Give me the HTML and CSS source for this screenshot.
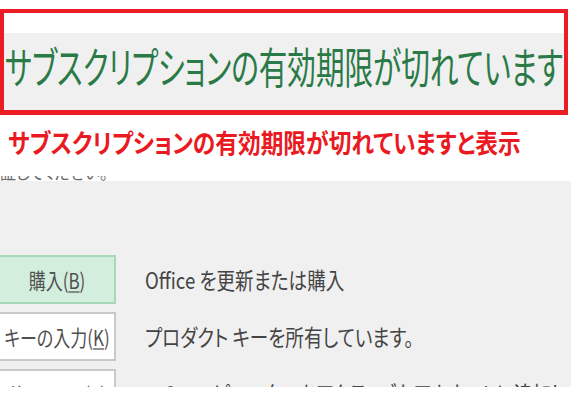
FILE: index.html
```html
<!DOCTYPE html>
<html lang="ja">
<head>
<meta charset="utf-8">
<link rel="stylesheet" href="styles.css">
</head>
<body>
<div class="page">
  <div class="top-gap"></div>
  <div class="callout">
    <div class="callout-white"></div>
    <div class="callout-band"><span class="title">サブスクリプションの有効期限が切れています</span></div>
  </div>
  <div class="note"><span class="note-text">サブスクリプションの有効期限が切れていますと表示</span></div>
  <div class="clip"><span class="clip-text">証してください。</span></div>
  <section class="panel">
    <div class="row">
      <div class="btn btn-primary"><span class="btn-label">購入(<u>B</u>)</span></div>
      <span class="desc">Office を更新または購入</span>
    </div>
    <div class="row">
      <div class="btn"><span class="btn-label">キーの入力(<u>K</u>)</span></div>
      <span class="desc">プロダクト キーを所有しています。</span>
    </div>
    <div class="row">
      <div class="btn"><span class="btn-label">サインイン(<u>S</u>)</span></div>
      <span class="desc">このコンピューターをアクティブなアカウントに追加します</span>
    </div>
  </section>
  <div class="bottom"></div>
</div>
</body>
</html>
```
FILE: styles.css
```css
html, body {
  margin: 0;
  padding: 0;
  background: #ffffff;
}
body {
  width: 571px;
  height: 400px;
  overflow: hidden;
  font-family: "Noto Sans CJK JP", "Noto Sans", sans-serif;
  font-feature-settings: "palt";
}
.page {
  display: flex;
  flex-direction: column;
  width: 571px;
}
.top-gap {
  height: 9px;
}
.callout {
  box-sizing: border-box;
  width: 568px;
  height: 106px;
  border: 4px solid #ec1c24;
  border-bottom-width: 5px;
  display: flex;
  flex-direction: column;
}
.callout-white {
  height: 20px;
  background: #ffffff;
}
.callout-band {
  flex: 1;
  background: #f0f0f0;
  display: flex;
  align-items: center;
  overflow: hidden;
  padding-left: 1px;
  padding-bottom: 10px;
  box-sizing: border-box;
}
.title {
  display: inline-block;
  white-space: nowrap;
  font-size: 28.6px;
  line-height: 1;
  font-weight: 400;
  color: #2a7a47;
  transform: scaleY(1.5);
  transform-origin: left center;
}
.note {
  height: 61px;
  display: flex;
  align-items: center;
  padding-left: 8px;
  padding-bottom: 4px;
  box-sizing: border-box;
}
.note-text {
  display: inline-block;
  white-space: nowrap;
  font-size: 22.7px;
  line-height: 1;
  font-weight: 700;
  color: #ea1a22;
  transform: scaleY(1.15);
  transform-origin: left center;
}
.clip {
  height: 5px;
  overflow: hidden;
}
.clip-text {
  display: block;
  margin-top: -13px;
  font-size: 16px;
  line-height: 18px;
  color: #666;
  white-space: nowrap;
}
.panel {
  height: 206px;
  background: #f0f0f0;
  overflow: hidden;
  box-sizing: border-box;
  padding-top: 74px;
  display: flex;
  flex-direction: column;
  gap: 8px;
}
.row {
  display: flex;
  align-items: center;
  gap: 29px;
  flex-shrink: 0;
}
.btn {
  box-sizing: border-box;
  width: 118px;
  height: 49px;
  margin-left: -2px;
  background: #ffffff;
  border: 2px solid #c9c9c9;
  display: flex;
  align-items: center;
  justify-content: center;
  flex-shrink: 0;
}
.btn-primary {
  background: #d3eedd;
  border-color: #a9d8b9;
}
.btn-label {
  display: inline-block;
  white-space: nowrap;
  font-size: 17px;
  line-height: 1;
  color: #505050;
  transform: scaleY(1.25);
}
.btn-label u {
  text-underline-offset: 2px;
  text-decoration-thickness: 1px;
}
.desc {
  display: inline-block;
  white-space: nowrap;
  font-size: 18.6px;
  line-height: 1;
  color: #444444;
  transform: scaleY(1.2);
  transform-origin: left center;
}
.bottom {
  height: 13px;
  background: #ffffff;
}
```
